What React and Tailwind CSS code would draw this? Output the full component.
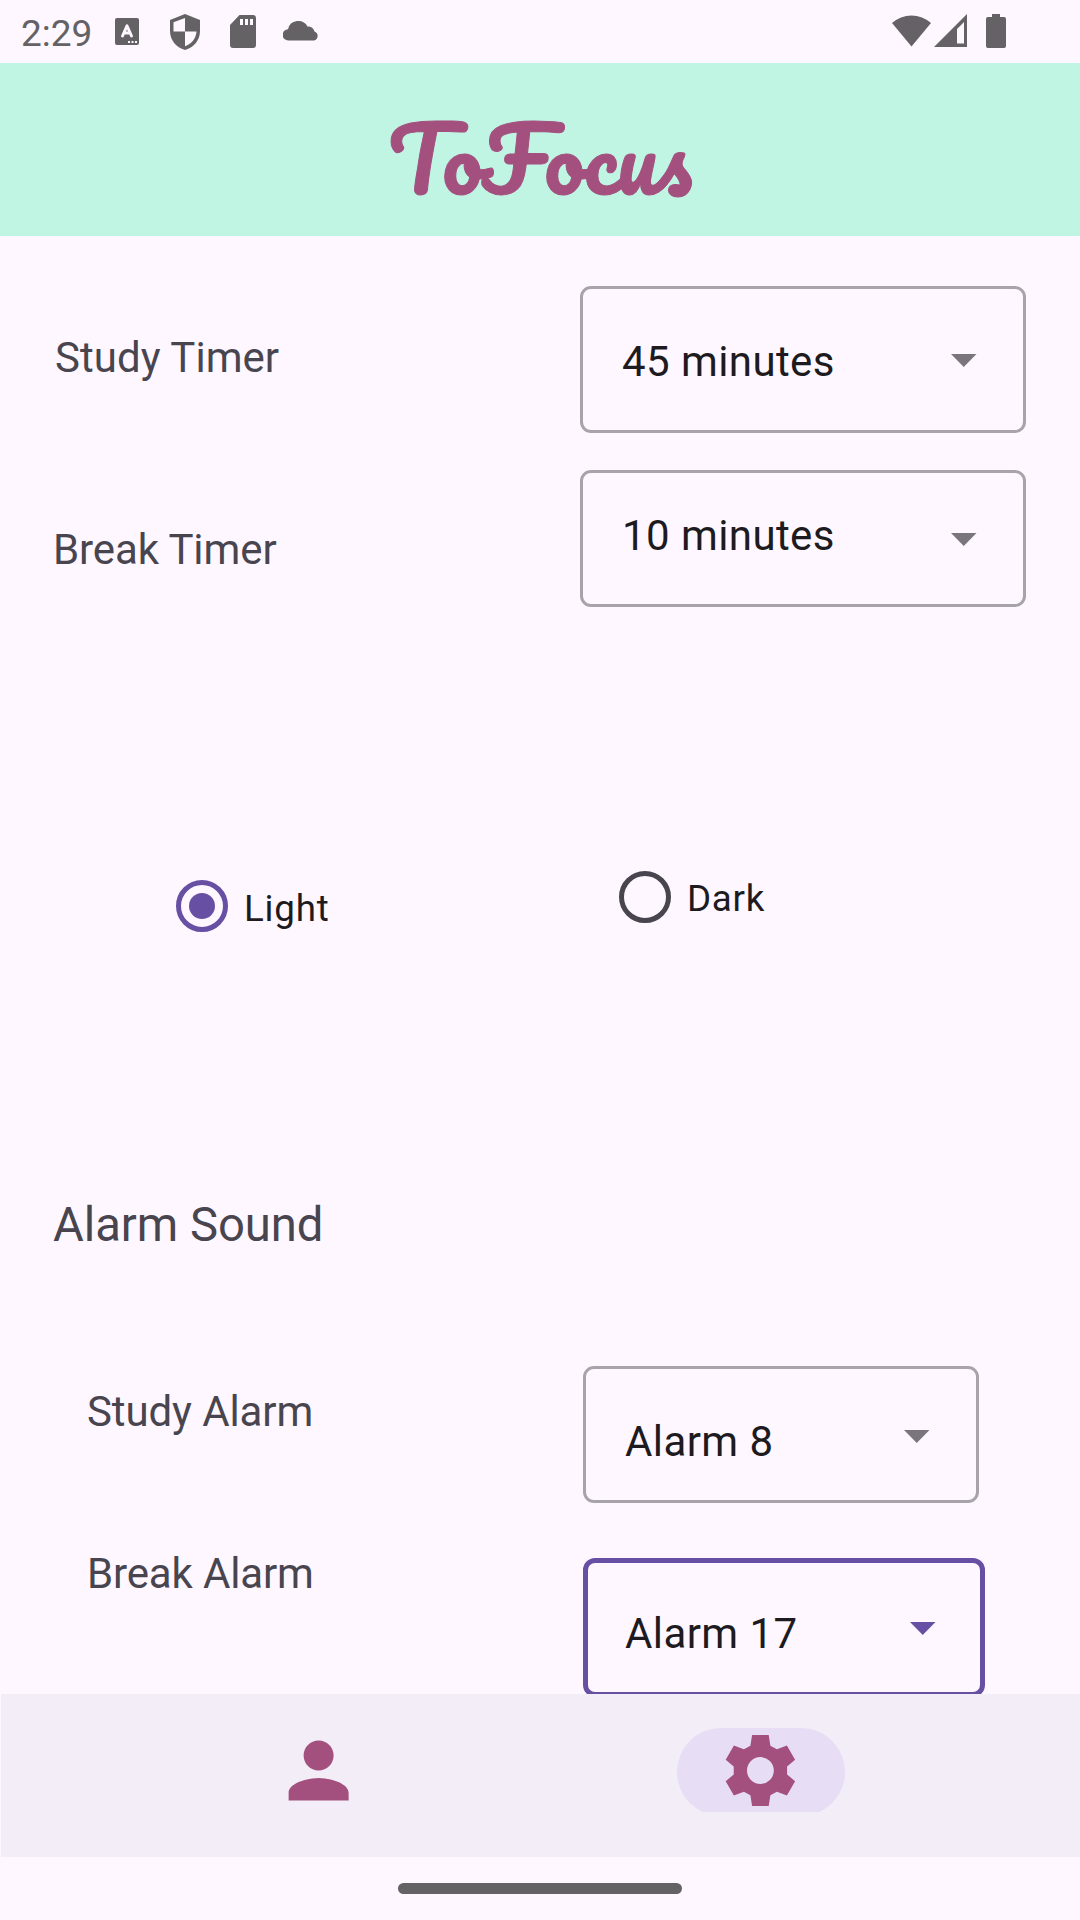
const INK = "bg-[#fef7ff]";

function StatusBar() {
  return (
    <div className="flex h-[63px] items-start text-[#656265]">
      <span className="ml-[21px] mt-[12px] w-[72px] text-[37px] leading-[43px] whitespace-nowrap">2:29</span>
      <svg className="ml-[22px] mt-[18px]" width="24" height="27" viewBox="0 0 24 27">
        <rect width="24" height="27" rx="2" fill="currentColor" />
        <path d="M7.500 18L12 7.800L16.500 18M9 15H15" fill="none" stroke="#fef7ff" strokeWidth="2.900" strokeLinecap="round" strokeLinejoin="round" />
        <path d="M13 23h2v2h-2zM16.500 23h2v2h-2zM20 23h2v2h-2z" fill="#fef7ff" />
      </svg>
      <svg className="ml-[31px] mt-[14px]" width="30" height="36" viewBox="0 0 30 36">
        <path d="M15 0L30 6V17C30 26 24 33.500 15 36C6 33.500 0 26 0 17V6Z" fill="currentColor" />
        <path d="M15 4V17.500H3.500V8.200ZM15 17.500H26.500C26 24.500 21.500 30 15 32.300Z" fill="#fef7ff" />
      </svg>
      <svg className="ml-[30px] mt-[15px]" width="26" height="33" viewBox="0 0 26 33">
        <path d="M9.500 0H23a3 3 0 0 1 3 3V30a3 3 0 0 1-3 3H3a3 3 0 0 1-3-3V10Z" fill="currentColor" />
        <path d="M10 4h3v6h-3zM15 4h3v6h-3zM20 4h3v6h-3z" fill="#fef7ff" />
      </svg>
      <svg className="ml-[27px] mt-[20px]" width="36" height="21" viewBox="0 0 36 21">
        <path d="M5.500 20.500A5.500 5.500 0 0 1 5 9.300A10.500 10.500 0 0 1 24.500 6.500A7 7 0 0 1 31.500 11.500A4.700 4.700 0 0 1 31 20.500Z" fill="currentColor" />
      </svg>
      <svg className="ml-[573px] mt-[14px]" width="39" height="33" viewBox="0 0 39 33">
        <path d="M0 9A29 29 0 0 1 39 9L19.500 32.500Z" fill="currentColor" />
      </svg>
      <svg className="ml-[3px] mt-[14px]" width="33" height="33" viewBox="0 0 33 33">
        <path d="M33 0V33H0ZM30 8L23 15V29.500H30Z" fill="currentColor" fillRule="evenodd" />
      </svg>
      <svg className="ml-[19px] mt-[14px]" width="20" height="34" viewBox="0 0 20 34">
        <path d="M6 0H14V3H18a2 2 0 0 1 2 2V32a2 2 0 0 1-2 2H2a2 2 0 0 1-2-2V5a2 2 0 0 1 2-2H6Z" fill="currentColor" />
      </svg>
    </div>
  );
}

function Caret({ className }) {
  return (
    <svg className={className} width="26" height="13" viewBox="0 0 26 13">
      <path d="M0 0H25.500L12.750 13Z" fill="currentColor" />
    </svg>
  );
}

function Select({ label, box, text, caret }) {
  return (
    <div className={"flex shrink-0 items-start justify-between " + box}>
      <span className={"text-[42px] leading-[50px] tracking-[0.42px] text-[#1d1b20] whitespace-nowrap " + text}>{label}</span>
      <Caret className={"shrink-0 " + caret} />
    </div>
  );
}

function Label({ children, className }) {
  return <span className={"whitespace-nowrap text-[#49454f] " + className}>{children}</span>;
}

export default function App() {
  return (
    <div className={"flex h-[1920px] w-[1080px] flex-col overflow-hidden font-['Roboto',sans-serif] " + INK}>
      <StatusBar />
      <header className="flex h-[173px] shrink-0 justify-center bg-[#c0f5e3]">
        <h1 className="mt-[35px] font-['Pacifico',cursive] text-[88.500px] leading-[120px] whitespace-nowrap text-[#a4507f] [-webkit-text-stroke:1px_#a4507f]">ToFocus</h1>
      </header>

      <main className="flex h-[1458px] shrink-0 flex-col overflow-hidden">
        <section className="flex h-[184px] shrink-0 items-start justify-between pl-[55px] pr-[54px] pt-[50px]">
          <Label className="mt-[47px] text-[42px] leading-[50px] tracking-[0.050px]">Study Timer</Label>
          <Select label="45 minutes" box="h-[147px] w-[446px] rounded-[11px] border-3 border-[#a8a3aa] pl-[39px] pr-[46px]" text="mt-[48px]" caret="mt-[65px] text-[#7a757c]" />
        </section>
        <section className="mt-[50px] flex h-[137px] shrink-0 items-start justify-between pl-[53px] pr-[54px]">
          <Label className="mt-[55px] text-[42px] leading-[50px] tracking-[-0.1px]">Break Timer</Label>
          <Select label="10 minutes" box="h-[137px] w-[446px] rounded-[11px] border-3 border-[#a8a3aa] pl-[39px] pr-[46px]" text="mt-[38px]" caret="mt-[60px] text-[#7a757c]" />
        </section>

        <section className="mt-[264px] flex h-[62px] shrink-0 items-start pl-[176px]">
          <div className="flex w-[443px] items-start pt-[9px]">
            <span className="flex size-[52px] items-center justify-center rounded-full border-5 border-[#6750a4]">
              <span className="size-[26px] rounded-full bg-[#6750a4]" />
            </span>
            <span className="ml-[16px] mt-[7px] text-[36.750px] leading-[44px] tracking-[0.800px] text-[#1d1b20]">Light</span>
          </div>
          <div className="flex items-start">
            <span className="size-[52px] rounded-full border-5 border-[#49454f]" />
            <span className="ml-[16px] mt-[6px] text-[36.750px] leading-[44px] tracking-[0.700px] text-[#1d1b20]">Dark</span>
          </div>
        </section>

        <h2 className="mt-[264px] h-[56px] shrink-0 pl-[53px] text-[47.250px] leading-[56px] tracking-[-0.050px] whitespace-nowrap text-[#49454f]">Alarm Sound</h2>

        <section className="mt-[113px] flex h-[137px] shrink-0 items-start pl-[87px]">
          <Label className="mt-[21px] w-[496px] text-[42px] leading-[50px] tracking-[-0.1px]">Study Alarm</Label>
          <Select label="Alarm 8" box="h-[137px] w-[396px] rounded-[11px] border-3 border-[#a8a3aa] pl-[39px] pr-[46px]" text="mt-[48px] tracking-[0.3px]" caret="mt-[61px] text-[#7a757c]" />
        </section>
        <section className="mt-[55px] flex h-[139px] shrink-0 items-start pl-[87px]">
          <Label className="-mt-[9px] w-[496px] text-[42px] leading-[50px] tracking-[-0.150px]">Break Alarm</Label>
          <Select label="Alarm 17" box="h-[139px] w-[402px] rounded-[12px] border-5 border-[#6750a4] pl-[37px] pr-[44px]" text="mt-[46px] tracking-[0.3px]" caret="mt-[59px] text-[#6750a4]" />
        </section>
      </main>

      <nav className="ml-px flex h-[163px] shrink-0 items-start bg-[#f2edf7] text-[#a4507f]">
        <svg className="ml-[273px] mt-[31px] shrink-0" width="90" height="90" viewBox="0.1 -0.1 24 24" fill="currentColor">
          <path d="M12 12c2.210 0 4-1.790 4-4s-1.790-4-4-4-4 1.790-4 4 1.790 4 4 4zm0 2c-2.670 0-8 1.340-8 4v2h16v-2c0-2.660-5.330-4-8-4z" />
        </svg>
        <div className="ml-[313px] mt-[34px] h-[84px] w-[168px] overflow-hidden">
          <div className="flex h-[88px] justify-center rounded-full bg-[#e7def6]">
            <svg className="mt-[6px] -ml-[2px]" width="72" height="72" viewBox="-36.400 -36.500 72 72">
              <path fill="currentColor" fillRule="evenodd" d="M-8.300 -35.500H8.300L10 -24.800L16.500 -21.300L26.500 -25L34.700 -10.700L26.700 -4V4L34.700 10.700L26.500 25L16.500 21.300L10 24.800L8.300 35.500H-8.300L-10 24.800L-16.500 21.300L-26.500 25L-34.700 10.700L-26.700 4V-4L-34.700 -10.700L-26.500 -25L-16.500 -21.300L-10 -24.800ZM0 -13.400A13.400 13.400 0 1 0 0 13.400A13.400 13.400 0 1 0 0 -13.400Z" />
            </svg>
          </div>
        </div>
      </nav>

      <footer className="flex h-[63px] shrink-0 justify-center pt-[26px]">
        <div className="h-[11px] w-[284px] rounded-full bg-[#656265]" />
      </footer>
    </div>
  );
}
